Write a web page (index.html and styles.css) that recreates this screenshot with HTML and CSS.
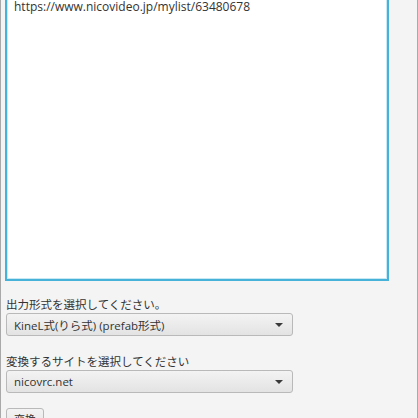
FILE: index.html
```html
<!DOCTYPE html>
<html lang="ja">
<head>
<meta charset="utf-8">
<link rel="stylesheet" href="styles.css">
</head>
<body>
<div class="window">
  <div class="textarea">
    <div class="line">https://www.nicovideo.jp/mylist/63480678</div>
  </div>
  <div class="field first">
    <div class="label">出力形式を選択してください。</div>
    <div class="combo"><span class="value">KineL式(りら式) (prefab形式)</span><span class="arrow"></span></div>
  </div>
  <div class="field">
    <div class="label">変換するサイトを選択してください</div>
    <div class="combo"><span class="value">nicovrc.net</span><span class="arrow"></span></div>
  </div>
  <div class="actions">
    <div class="button">変換</div>
  </div>
</div>
</body>
</html>
```
FILE: styles.css
```css
html, body {
  margin: 0;
  padding: 0;
  height: 100%;
  overflow: hidden;
  background: #f4f4f4;
}
.window {
  box-sizing: border-box;
  width: 418px;
  height: 418px;
  border-left: 1px solid #a9a9a9;
  border-right: 1px solid #a9a9a9;
  background: #f4f4f4;
  font-family: "Open Sans", "Noto Sans CJK JP", sans-serif;
  font-size: 12px;
  color: #333;
  overflow: hidden;
}
.textarea {
  box-sizing: border-box;
  margin: -10px 0 0 4px;
  width: 384px;
  height: 291px;
  background: #fff;
  border: 2px solid #46b2d9;
  box-shadow: inset 0 0 0 1px #c8e8f4;
  padding: 8px 7px;
}
.line {
  line-height: 14px;
  color: #333;
}
.field {
  margin: 18px 0 0 5px;
}
.field.first {
  margin-top: 16px;
}
.label {
  line-height: 16px;
  font-size: 11.5px;
  color: #333;
}
.combo {
  box-sizing: border-box;
  margin-top: 0;
  width: 287px;
  height: 23px;
  border: 1px solid #b9b9b9;
  border-radius: 3px;
  background: linear-gradient(#f3f3f3, #e3e3e3);
  display: flex;
  align-items: center;
  justify-content: space-between;
  padding: 0 9px 0 7px;
}
.value {
  font-size: 11.5px;
  color: #333;
}
.arrow {
  width: 0;
  height: 0;
  border-left: 4px solid transparent;
  border-right: 4px solid transparent;
  border-top: 4px solid #3a3a3a;
}
.actions {
  margin: 15px 0 0 5px;
}
.button {
  box-sizing: border-box;
  width: 38px;
  height: 24px;
  border: 1px solid #b9b9b9;
  border-radius: 3px;
  background: linear-gradient(#f3f3f3, #e3e3e3);
  font-size: 11px;
  text-align: center;
  line-height: 22px;
}
```
